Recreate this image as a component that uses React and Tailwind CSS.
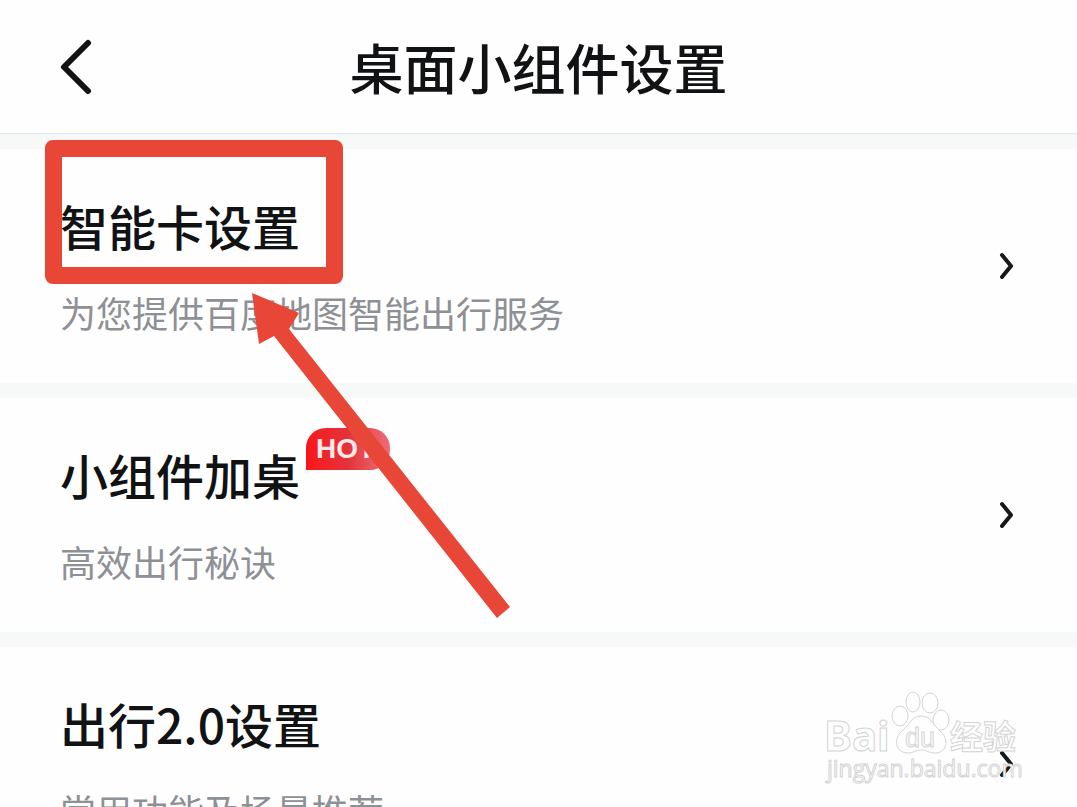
import React from "react";

const items = [
  { title: "智能卡设置", desc: "为您提供百度地图智能出行服务", marked: true },
  { title: "小组件加桌", desc: "高效出行秘诀", hot: true },
  { title: "出行2.0设置", desc: "常用功能及场景推荐" },
];

const BackIcon = () => (
  <svg width="32" height="56" viewBox="0 0 32 56" fill="none">
    <path
      d="M28 4 L4 28 L28 52"
      stroke="#111214"
      strokeWidth="6"
      strokeLinecap="round"
      strokeLinejoin="round"
    />
  </svg>
);

const ChevronIcon = () => (
  <svg width="16" height="28" viewBox="0 0 16 28" fill="none">
    <path
      d="M4 3 L13 14 L4 25"
      stroke="#17181a"
      strokeWidth="4"
      strokeLinecap="round"
      strokeLinejoin="round"
    />
  </svg>
);

// red frame and arrow pointing at the first entry
const Marker = () => (
  <div className="pointer-events-none absolute -top-[9px] left-[45px] z-10">
    <div className="h-36 w-[298px] rounded-lg border-[17px] border-[#e84637]" />
    <svg
      className="absolute top-[152px] left-[206px]"
      width="262"
      height="330"
      viewBox="0 0 262 330"
    >
      <path
        d="M1 1 L48 21 L38 37 L259 315 L246 326 L23 44 L8 52 Z"
        fill="#e84637"
      />
    </svg>
  </div>
);

const HotBadge = () => (
  <span className="absolute -top-[10px] left-full ml-[6px] flex h-[42px] w-[84px] items-center rounded-t-[20px] rounded-br-[20px] bg-linear-to-r from-[#fa1217] via-[#e3323a] to-[#ee6a78] pl-[10px] font-['Liberation_Sans',sans-serif] text-[28px] leading-none font-bold text-[#fbe9e9]">
    HOT
  </span>
);

const Item = ({ title, desc, marked, hot }) => (
  <li className="relative bg-[#fefefe]">
    <a href="#" className="flex items-center justify-between pr-[63px] pl-[60px]">
      <div className="pt-10 pb-[44px]">
        <h2 className="relative w-fit text-[48px] leading-[72px] font-medium text-[#111214]">
          {title}
          {hot && <HotBadge />}
        </h2>
        <p className="mt-6 text-[36px] leading-[54px] text-[#8d9095]">
          {desc}
        </p>
      </div>
      <ChevronIcon />
    </a>
    {marked && <Marker />}
  </li>
);

const Watermark = () => (
  <svg
    className="pointer-events-none absolute right-[53px] bottom-[17px] z-20"
    width="200"
    height="104"
    viewBox="0 0 200 104"
    fill="#fefefe"
    stroke="#d4d4d4"
    strokeWidth="1"
  >
    <text
      x="0"
      y="65"
      fontSize="42"
      fontWeight="bold"
      fontFamily="'Noto Sans', sans-serif"
    >
      Bai
    </text>
    <ellipse cx="76" cy="30" rx="8" ry="10" />
    <ellipse cx="89" cy="16" rx="7" ry="10" />
    <ellipse cx="106" cy="17" rx="8" ry="10" />
    <ellipse cx="117" cy="34" rx="8" ry="10" />
    <path d="M97 30 C87 30 86 39 79 44 C69 52 71 66 83 67 C90 67 92 64 97 64 C102 64 105 67 112 67 C124 66 125 52 116 45 C109 39 107 30 97 30 Z" />
    <text
      x="81"
      y="61"
      fontSize="27"
      fontFamily="'Liberation Sans', sans-serif"
    >
      du
    </text>
    <text
      x="126"
      y="63"
      fontSize="33"
      fontWeight="bold"
      fontFamily="'Noto Sans CJK SC', sans-serif"
    >
      经验
    </text>
    <text x="3" y="91" fontSize="23" fontFamily="'Open Sans', sans-serif">
      jingyan.baidu.com
    </text>
  </svg>
);

const App = () => {
  return (
    <div className="relative h-screen overflow-hidden bg-[#f7f8f8] font-['Noto_Sans_CJK_SC',sans-serif]">
      <header className="grid grid-cols-[1fr_auto_1fr] items-center border-b border-[#e3e7e9] bg-[#fefefe] px-[60px] pt-[27px] pb-[26px]">
        <button type="button" aria-label="返回" className="w-fit">
          <BackIcon />
        </button>
        <h1 className="text-[54px] leading-[80px] font-medium text-[#111214]">
          桌面小组件设置
        </h1>
      </header>

      <ul className="mt-[15px] flex flex-col gap-[15px]">
        {items.map((item) => (
          <Item key={item.title} {...item} />
        ))}
      </ul>

      <Watermark />
    </div>
  );
};

export default App;
